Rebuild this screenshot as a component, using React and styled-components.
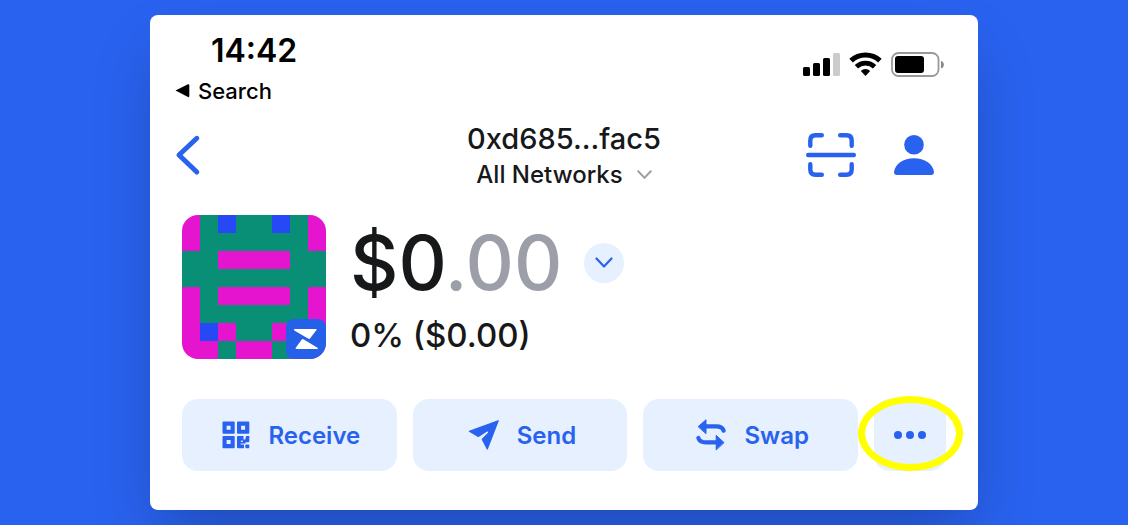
import React from 'react'
import styled, { createGlobalStyle } from 'styled-components'

const GlobalStyle = createGlobalStyle`
	* {
		box-sizing: border-box;
	}

	body {
		margin: 0;
		background-color: #2962ef;
		font-family: Inter, "Liberation Sans", sans-serif;
		color: #16181a;
	}

	button {
		border: none;
		padding: 0;
		background: none;
		font-family: inherit;
		color: inherit;
		cursor: pointer;
	}

	svg {
		display: block;
		flex-shrink: 0;
	}
`

const Page = styled.div`
	display: flex;
	justify-content: center;
	padding: 15px;
`

const Card = styled.main`
	width: 100%;
	max-width: 828px;
	padding: 16px 0 39px;
	border-radius: 8px;
	background-color: #fff;
	box-shadow: 0 30px 60px -12px rgba(0, 0, 0, 0.25);
`

const StatusBar = styled.div`
	display: flex;
	justify-content: space-between;
	padding: 0 34px 0 25px;
	color: #000;
`

const Time = styled.div`
	padding-left: 36px;
	font-size: 32px;
	font-weight: 600;
	line-height: 40px;
`

const BackToApp = styled.a`
	display: flex;
	align-items: center;
	gap: 8px;
	font-size: 22px;
	font-weight: 500;
	line-height: 40px;
	color: inherit;
	text-decoration: none;
`

const StatusIcons = styled.div`
	display: flex;
	align-items: flex-start;
	gap: 9px;
	padding-top: 20px;
`

const Header = styled.header`
	display: grid;
	grid-template-columns: 1fr auto 1fr;
	align-items: center;
	margin-top: 8px;
	padding: 0 25px;
`

const IconButton = styled.button`
	display: flex;
	justify-self: start;
	color: #2962ef;
`

const Account = styled.div`
	display: flex;
	flex-direction: column;
	align-items: center;
`

const Address = styled.h1`
	margin: 0;
	font-size: 29px;
	font-weight: 500;
	line-height: 40px;
`

const NetworkButton = styled.button`
	display: flex;
	align-items: center;
	gap: 14px;
	font-size: 24px;
	font-weight: 500;
	line-height: 32px;
`

const HeaderActions = styled.div`
	display: flex;
	align-items: center;
	justify-content: flex-end;
	gap: 38px;
	padding-right: 19px;
`

const Portfolio = styled.section`
	display: flex;
	gap: 24px;
	margin-top: 24px;
	padding: 0 32px;
`

const Avatar = styled.div`
	position: relative;
	display: grid;
	grid-template-columns: repeat(8, 18px);
	grid-auto-rows: 18px;
	border-radius: 16px;
	overflow: hidden;
`

const Pixel = styled.span`
	background-color: ${props => props.$color};
`

const WalletBadge = styled.span`
	position: absolute;
	right: 0;
	bottom: 0;
	border-radius: 8px;
	background-color: #2760e8;
`

const Totals = styled.div`
	padding-top: 10px;
`

const BalanceRow = styled.div`
	display: flex;
	align-items: center;
	gap: 22px;
`

const Balance = styled.div`
	font-size: 75px;
	font-weight: 500;
	line-height: 76px;
`

const Cents = styled.span`
	color: #9c9fa8;
`

const CurrencyButton = styled.button`
	display: flex;
	align-items: center;
	justify-content: center;
	width: 40px;
	height: 40px;
	border-radius: 50%;
	background-color: #e6f0ff;
	color: #2962ef;
`

const Change = styled.div`
	margin-top: 14px;
	font-size: 33px;
	font-weight: 500;
	line-height: 40px;
`

const Actions = styled.nav`
	display: grid;
	grid-template-columns: 1fr 1fr 1fr 72px;
	gap: 16px;
	margin-top: 40px;
	padding: 0 32px;
`

const ActionButton = styled.button`
	display: flex;
	align-items: center;
	justify-content: center;
	gap: 18px;
	width: 100%;
	height: 72px;
	padding-left: ${props => (props.$iconOnly ? '0' : '4px')};
	border-radius: 16px;
	background-color: #e6f0ff;
	color: #2962ef;
	font-size: 24px;
	font-weight: 600;
`

const MoreWrap = styled.div`
	position: relative;
`

const Highlight = styled.span`
	position: absolute;
	inset: -3px -17px 0 -16px;
	border: 7px solid #ffff00;
	border-radius: 50%;
	pointer-events: none;
`

const colors = { P: '#e515cf', G: '#088f76', B: '#2648f5' }

const pixels = [
	'PGBGGBGP',
	'PGGGGGGP',
	'GGPPPPGG',
	'GGGGGGGG',
	'PGPPPPGP',
	'PGGGGGGP',
	'PBPGGPBP',
	'PPGPPGPP',
]

function SignalIcon() {
	return (
		<svg width="37" height="26" viewBox="0 0 37 26">
			<rect x="0" y="16" width="7" height="9" rx="1.5" />
			<rect x="10" y="12" width="7" height="13" rx="1.5" />
			<rect x="20" y="7" width="7" height="18" rx="1.5" />
			<rect x="30" y="2" width="7" height="23" rx="1.5" fill="#ccc" />
		</svg>
	)
}

function WifiIcon() {
	return (
		<svg width="33" height="26" viewBox="0 0 33 26" fill="none" stroke="#000">
			<path d="M2.1 9.6A21.3 21.3 0 0 1 30.9 9.6" strokeWidth="5.2" />
			<path d="M7.4 15.8A13.2 13.2 0 0 1 25.6 15.8" strokeWidth="4.8" />
			<path d="M16.5 24.9L11.8 20A6.8 6.8 0 0 1 21.2 20Z" fill="#000" stroke="none" />
		</svg>
	)
}

function BatteryIcon() {
	return (
		<svg width="53" height="26" viewBox="0 0 53 26">
			<rect x="1" y="2" width="46.5" height="23" rx="6.5" fill="none" stroke="#999" strokeWidth="1.8" />
			<rect x="4" y="5" width="29" height="17" rx="3" />
			<path d="M50 9.7C53.8 11 53.8 16.3 50 17.6Z" fill="#888" />
		</svg>
	)
}

function BackIcon() {
	return (
		<svg width="26" height="42" viewBox="0 0 26 42" fill="none" stroke="currentColor" strokeWidth="5" strokeLinecap="round" strokeLinejoin="round">
			<path d="M21.8 4.3L4 21L21.8 38" />
		</svg>
	)
}

function ScanIcon() {
	return (
		<svg width="50" height="50" viewBox="0 0 50 50" fill="none" stroke="currentColor" strokeWidth="4.4" strokeLinecap="round">
			<path d="M4.3 15.8V10.5Q4.3 5.3 9.5 5.3H15.8" />
			<path d="M34.2 5.3H40.5Q45.7 5.3 45.7 10.5V15.8" />
			<path d="M4.3 34.2V39.5Q4.3 44.7 9.5 44.7H15.8" />
			<path d="M34.2 44.7H40.5Q45.7 44.7 45.7 39.5V34.2" />
			<path d="M2.2 25H47.8" />
		</svg>
	)
}

function PersonIcon() {
	return (
		<svg width="40" height="50" viewBox="0 0 40 50" fill="currentColor">
			<circle cx="20" cy="14.7" r="9.8" />
			<path d="M3 45Q0 45 0 42C1 34 9.5 28.3 20 28.3S39 34 40 42Q40 45 37 45Z" />
		</svg>
	)
}

function ChevronIcon({ width, height, stroke, strokeWidth }) {
	return (
		<svg width={width} height={height} viewBox="0 0 18 12" fill="none" stroke={stroke} strokeWidth={strokeWidth} strokeLinecap="round" strokeLinejoin="round">
			<path d="M1.5 1.5L9 9.5L16.5 1.5" />
		</svg>
	)
}

function QrIcon() {
	return (
		<svg width="28" height="28" viewBox="0 0 28 28" fill="currentColor">
			<path fillRule="evenodd" d="M1.5 .5H11.7Q12.7 .5 12.7 1.5V11.8Q12.7 12.8 11.7 12.8H1.5Q.5 12.8 .5 11.8V1.5Q.5 .5 1.5 .5ZM4.6 4.7V8.7H8.6V4.7Z" />
			<path fillRule="evenodd" d="M16 .5H26.3Q27.3 .5 27.3 1.5V11.8Q27.3 12.8 26.3 12.8H16Q15 12.8 15 11.8V1.5Q15 .5 16 .5ZM19.1 4.7V8.7H23.1V4.7Z" />
			<path fillRule="evenodd" d="M1.5 15H11.7Q12.7 15 12.7 16V26.3Q12.7 27.3 11.7 27.3H1.5Q.5 27.3 .5 26.3V16Q.5 15 1.5 15ZM4.6 19.1V23.1H8.6V19.1Z" />
			<path d="M16 15H21.5V18.5H23.3L24 15H27.3V20Q27.3 21.2 26 21.2H23.5V22.5H18.6V23.5H22V27.3H16Q15 27.3 15 26.3V16Q15 15 16 15Z" />
			<path d="M18.8 19.6H21V20.8H18.8Z" fill="#e6f0ff" />
			<rect x="23.3" y="23.4" width="4" height="3.9" rx="1" />
		</svg>
	)
}

function SendIcon() {
	return (
		<svg width="31" height="32" viewBox="0 0 31 32" fill="currentColor" stroke="currentColor" strokeWidth="1.2" strokeLinejoin="round">
			<path d="M30.2 1.8L1.4 12.3L10.3 17.4L18.4 12.2Q21.2 11.4 20.6 13.8L14.2 20.3L19.3 30Z" />
		</svg>
	)
}

function SwapIcon() {
	return (
		<svg width="30" height="32" viewBox="0 0 30 32" fill="none" stroke="currentColor" strokeWidth="4.2" strokeLinecap="round">
			<path d="M9.5 7.4H20Q26.5 7.4 27.6 11.6" />
			<path d="M20.5 23.4H10Q3.5 23.4 2.4 19" />
			<path d="M2.4 7.4L10 .8V14.3Z" fill="currentColor" strokeWidth="1" strokeLinejoin="round" />
			<path d="M27.8 23.4L20.2 16.3V30.6Z" fill="currentColor" strokeWidth="1" strokeLinejoin="round" />
		</svg>
	)
}

const actions = [
	{ label: 'Receive', icon: <QrIcon /> },
	{ label: 'Send', icon: <SendIcon /> },
	{ label: 'Swap', icon: <SwapIcon /> },
]

export default function App() {
	return (
		<Page>
			<GlobalStyle />
			<Card>
				<StatusBar>
					<div>
						<Time>14:42</Time>
						<BackToApp href="#search">
							<svg width="15" height="14" viewBox="0 0 15 14">
								<path d="M.5 6.5L13 .3Q14.3 0 14.3 1.5V12Q14.3 13.5 13 13Z" />
							</svg>
							Search
						</BackToApp>
					</div>
					<StatusIcons>
						<SignalIcon />
						<WifiIcon />
						<BatteryIcon />
					</StatusIcons>
				</StatusBar>
				<Header>
					<IconButton aria-label="Back">
						<BackIcon />
					</IconButton>
					<Account>
						<Address>0xd685...fac5</Address>
						<NetworkButton>
							All Networks
							<ChevronIcon width="15" height="10" stroke="#9c9fa8" strokeWidth="2.4" />
						</NetworkButton>
					</Account>
					<HeaderActions>
						<IconButton aria-label="Scan">
							<ScanIcon />
						</IconButton>
						<IconButton aria-label="Profile">
							<PersonIcon />
						</IconButton>
					</HeaderActions>
				</Header>
				<Portfolio>
					<Avatar>
						{pixels.join('').split('').map((key, i) => (
							<Pixel key={i} $color={colors[key]} />
						))}
						<WalletBadge>
							<svg width="40" height="40" viewBox="0 0 40 40" fill="#fff">
								<path d="M8.5 10H30Q31 10 30.5 11L24 19.5Q23.3 20.4 22 19.6L8.3 11.5Q7.5 10 8.5 10Z" />
								<path d="M10.3 30Q9 30 9.8 28.8L15.8 20.6Q16.6 19.7 17.8 20.4L31.5 28.7Q32.6 30 31.3 30Z" />
							</svg>
						</WalletBadge>
					</Avatar>
					<Totals>
						<BalanceRow>
							<Balance>
								$0<Cents>.00</Cents>
							</Balance>
							<CurrencyButton aria-label="Change currency">
								<ChevronIcon width="18" height="12" stroke="currentColor" strokeWidth="2.2" />
							</CurrencyButton>
						</BalanceRow>
						<Change>0% ($0.00)</Change>
					</Totals>
				</Portfolio>
				<Actions>
					{actions.map(action => (
						<ActionButton key={action.label}>
							{action.icon}
							{action.label}
						</ActionButton>
					))}
					<MoreWrap>
						<ActionButton $iconOnly aria-label="More">
							<svg width="32" height="8" viewBox="0 0 32 8" fill="currentColor">
								<circle cx="4" cy="4" r="4" />
								<circle cx="16" cy="4" r="4" />
								<circle cx="28" cy="4" r="4" />
							</svg>
						</ActionButton>
						<Highlight />
					</MoreWrap>
				</Actions>
			</Card>
		</Page>
	)
}
